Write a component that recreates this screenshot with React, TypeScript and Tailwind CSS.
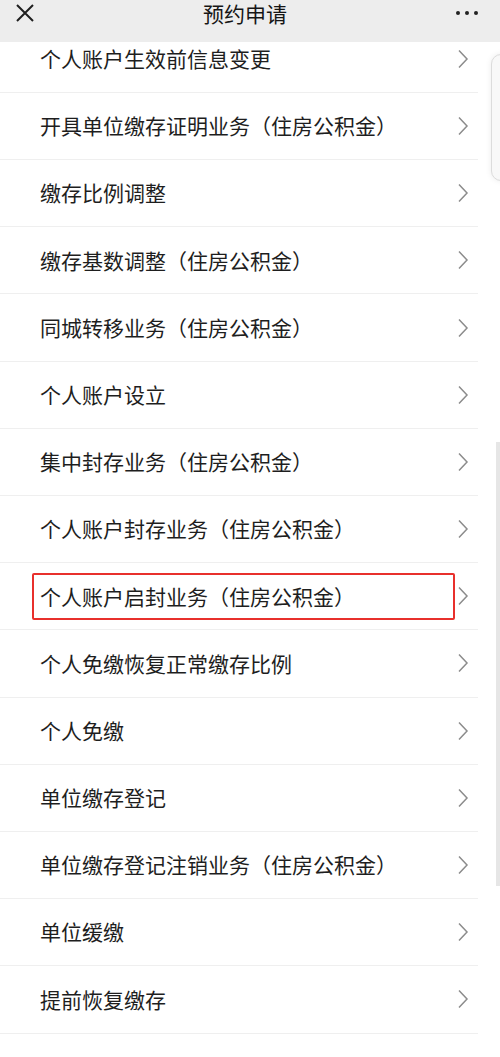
import React from "react";

const items = [
  "个人账户生效前信息变更",
  "开具单位缴存证明业务（住房公积金）",
  "缴存比例调整",
  "缴存基数调整（住房公积金）",
  "同城转移业务（住房公积金）",
  "个人账户设立",
  "集中封存业务（住房公积金）",
  "个人账户封存业务（住房公积金）",
  "个人账户启封业务（住房公积金）",
  "个人免缴恢复正常缴存比例",
  "个人免缴",
  "单位缴存登记",
  "单位缴存登记注销业务（住房公积金）",
  "单位缓缴",
  "提前恢复缴存",
  "单位缴存信息变更",
];

const Chevron = () => (
  <svg width="12" height="20" viewBox="0 0 12 20" className="shrink-0">
    <polyline
      points="2,1.5 10,10 2,18.5"
      fill="none"
      stroke="#8c8c8c"
      strokeWidth="1.5"
      strokeLinejoin="miter"
    />
  </svg>
);

export default function App() {
  return (
    <div
      className="relative w-[500px] h-[1057px] overflow-hidden bg-white"
      style={{ fontFamily: '"Noto Sans CJK SC", "Noto Sans", sans-serif' }}
    >
      {/* top bar */}
      <div className="relative z-10 h-[42px] bg-[#ededed] flex items-start justify-between px-[16px]">
        <svg width="18" height="18" viewBox="0 0 18 18" className="mt-[4px]">
          <path d="M1 1 L17 17 M17 1 L1 17" stroke="#1f1f1f" strokeWidth="2" />
        </svg>
        <div className="text-[21px] leading-[27px] text-[#151515]">预约申请</div>
        <div className="flex gap-[5px] items-center mt-[11px] mr-[6px]">
          <span className="w-[4px] h-[4px] rounded-full bg-[#222]" />
          <span className="w-[4px] h-[4px] rounded-full bg-[#222]" />
          <span className="w-[4px] h-[4px] rounded-full bg-[#222]" />
        </div>
      </div>

      {/* list */}
      <div className="-mt-[16.3px]">
        {items.map((t, i) => (
          <div
            key={i}
            className="h-[67.2px] w-[478px] border-b border-[#efefef] flex items-center justify-between pr-[9px]"
          >
            {i === 8 ? (
              <div className="ml-[32px] w-[423px] h-[47px] border-2 border-[#e8302c] rounded-[2px] pl-[6px] flex items-center text-[21px] text-[#1e1e1e]">
                {t}
              </div>
            ) : (
              <div className="pl-[40px] text-[21px] text-[#1e1e1e]">{t}</div>
            )}
            <Chevron />
          </div>
        ))}
      </div>

      {/* floating panel edge */}
      <div className="absolute left-[491px] top-[54px] w-[30px] h-[127px] rounded-[10px] border border-[#dcdcdc] bg-[#f8f8f8] shadow-[0_0_6px_rgba(0,0,0,0.08)]" />

      {/* scrollbar */}
      <div className="absolute left-[496px] top-[442px] w-[4px] h-[444px] bg-[#e6e6e6]" />
    </div>
  );
}
